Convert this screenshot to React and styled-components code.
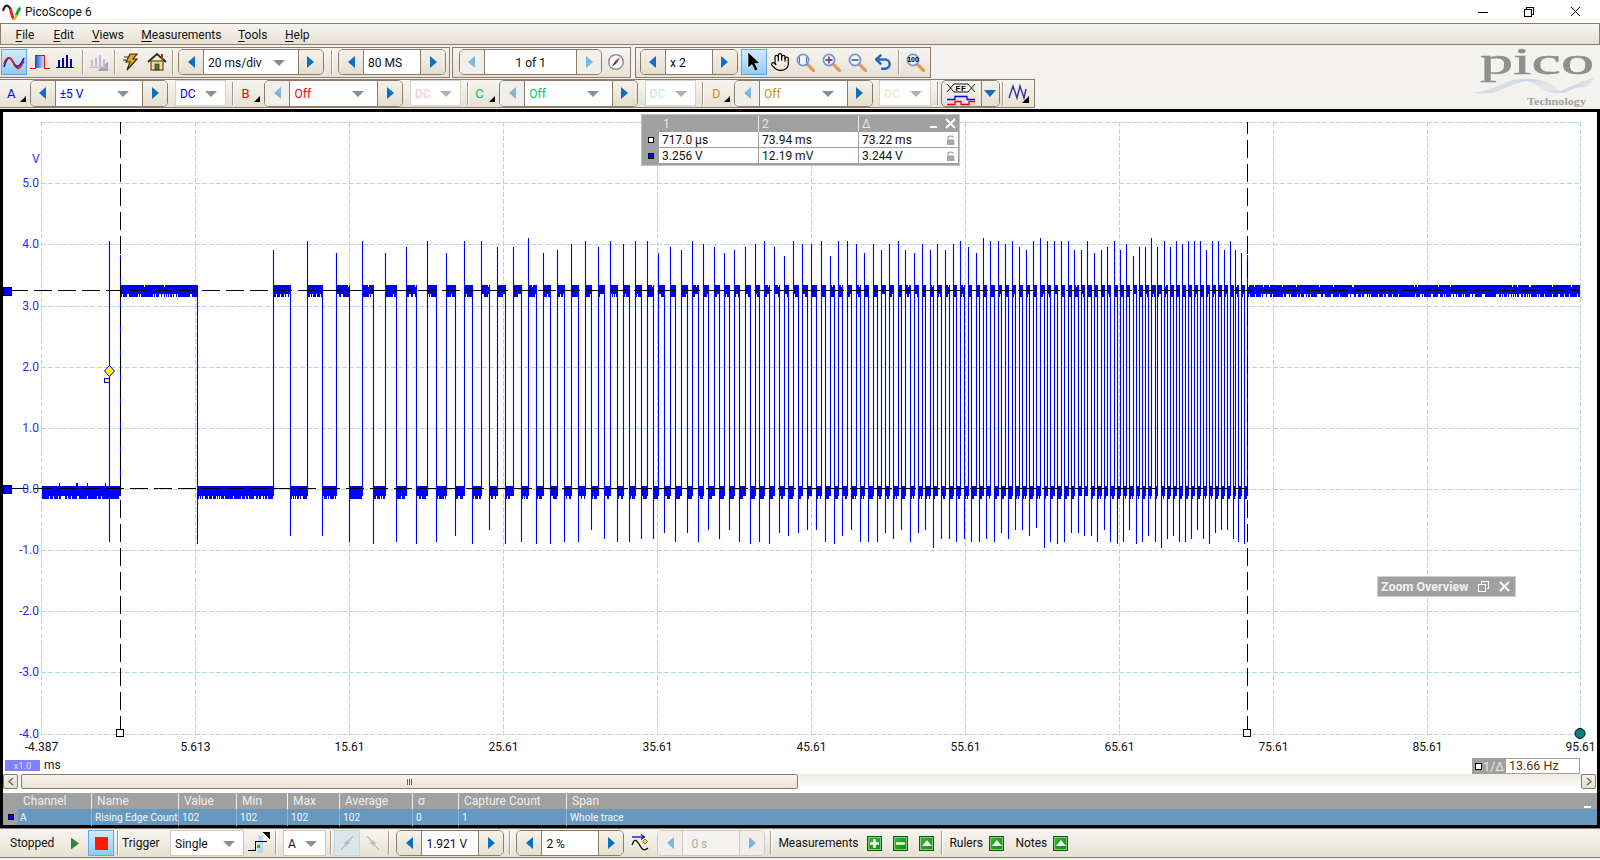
import React from 'react';
import styled, { createGlobalStyle } from 'styled-components';
import { Hand, Undo2 } from 'lucide-react';

const GlobalStyle = createGlobalStyle`
	html, body { margin: 0; padding: 0; background: #fff; }
	body { font-family: Roboto, "Liberation Sans", sans-serif; font-size: 12px; color: #111; }
`;

const BROWN = '#8b7c6e';
const BAR_BG = 'linear-gradient(#f5f3ee, #f3f0e9 30%, #e7e1d2)';

/* ---------- layout ---------- */
const Page = styled.div`
	width: 1600px;
	height: 860px;
	display: flex;
	flex-direction: column;
	overflow: hidden;
`;

const TitleBar = styled.div`
	height: 23px;
	display: flex;
	align-items: center;
	padding-left: 2px;
	background: #fff;
	flex: none;
`;

const TitleText = styled.span`
	margin-left: 3px;
`;

const WinButtons = styled.div`
	margin-left: auto;
	display: flex;
	margin-right: 2px;
`;

const WinButton = styled.div`
	width: 46px;
	height: 21px;
	display: flex;
	align-items: center;
	justify-content: center;
`;

const MenuBar = styled.div`
	height: 22px;
	box-sizing: border-box;
	flex: none;
	display: flex;
	align-items: center;
	padding-top: 2px;
	border: 1px solid ${BROWN};
	background: ${BAR_BG};
`;

const MenuSlot = styled.span`
	width: ${(p) => p.$w}px;
	flex: none;
	&:first-child { margin-left: 14.5px; }
	u { text-underline-offset: 2px; }
`;

const TopArea = styled.div`
	height: 64px;
	flex: none;
	display: flex;
	background: #f4f2ee;
`;

const Rows = styled.div`
	display: flex;
	flex-direction: column;
	padding-top: 2px;
`;

const Row = styled.div`
	display: flex;
	height: ${(p) => p.$h}px;
	margin-bottom: 1px;
`;

const Group = styled.div`
	width: ${(p) => p.$w}px;
	margin-right: ${(p) => p.$mr || 0}px;
	box-sizing: border-box;
	display: flex;
	align-items: center;
	padding-left: 1px;
	border: 1px solid ${BROWN};
	border-left-width: ${(p) => (p.$flush ? 0 : 1)}px;
	background: ${BAR_BG};
`;

const Sep = styled.div`
	width: 1px;
	align-self: stretch;
	margin: 2px ${(p) => p.$r ?? 3}px 2px ${(p) => p.$l ?? 3}px;
	background: #a79a8c;
	box-shadow: 1px 0 0 #fff;
	flex: none;
`;

const IconBtn = styled.div`
	width: ${(p) => p.$w || 26}px;
	height: 26px;
	box-sizing: border-box;
	flex: none;
	display: flex;
	align-items: center;
	justify-content: center;
	margin-left: ${(p) => p.$ml || 0}px;
	${(p) => p.$active && 'background: linear-gradient(#d5ebfd, #8fcbfb); border: 1px solid #62a8e4;'}
	${(p) => p.$dimmed && 'background: #dbe6ea; border: 1px solid #c6d6dc;'}
`;

/* ---------- spinner ---------- */
const SpinnerBox = styled.div`
	width: ${(p) => p.$w}px;
	height: ${(p) => p.$h || 26}px;
	margin-left: ${(p) => p.$ml || 0}px;
	box-sizing: border-box;
	flex: none;
	display: flex;
	border: 1px solid ${(p) => (p.$off ? '#cfc9c0' : BROWN)};
	border-radius: 5px;
	overflow: hidden;
`;

const ArrowBtn = styled.div`
	width: ${(p) => p.$w || 24}px;
	flex: none;
	display: flex;
	align-items: center;
	justify-content: center;
	background: ${(p) => (p.$off ? '#f1efea' : 'linear-gradient(#f5f2ea, #e6dfcf)')};
	&::after {
		content: '';
		border-style: solid;
		border-width: 6px 0 6px 7px;
		border-color: transparent transparent transparent ${(p) => (p.$off ? '#7db6df' : '#0b6fc2')};
		transform: ${(p) => (p.$left ? 'scaleX(-1)' : 'none')};
	}
`;

const SpinValue = styled.div`
	flex: 1;
	min-width: 0;
	display: flex;
	align-items: center;
	justify-content: ${(p) => (p.$center ? 'center' : 'space-between')};
	padding: 1px ${(p) => (p.$combo ? 13 : 4)}px 0 ${(p) => p.$pad || 4}px;
	background: ${(p) => (p.$off ? '#f4f2ee' : '#fff')};
	border-left: 1px solid ${(p) => (p.$off ? '#cfc9c0' : BROWN)};
	border-right: 1px solid ${(p) => (p.$off ? '#cfc9c0' : BROWN)};
	color: ${(p) => p.$color || '#111'};
`;

const DownTri = styled.span`
	width: 0;
	height: 0;
	flex: none;
	border-style: solid;
	border-width: 6px 6px 0;
	border-color: ${(p) => p.$color || '#8e8e8e'} transparent transparent;
`;

const Spinner = ({ w, h, ml, value, color, combo, center, leftOff, rightOff, off, pad }) => (
	<SpinnerBox $w={w} $h={h} $ml={ml} $off={off}>
		<ArrowBtn $left $off={leftOff || off} />
		<SpinValue $combo={combo} $center={center} $color={color} $off={off} $pad={pad}>
			<span>{value}</span>
			{combo && <DownTri />}
		</SpinValue>
		<ArrowBtn $off={rightOff || off} />
	</SpinnerBox>
);

const ComboBox = styled.div`
	width: ${(p) => p.$w}px;
	height: ${(p) => p.$h || 25}px;
	margin-left: ${(p) => p.$ml || 0}px;
	box-sizing: border-box;
	flex: none;
	display: flex;
	align-items: center;
	justify-content: space-between;
	padding: 1px 8px 0 4px;
	background: #fff;
	border: 1px solid ${(p) => p.$border || '#d6d2ca'};
	color: ${(p) => p.$color || '#111'};
`;

const ChanBtn = styled.div`
	position: relative;
	width: ${(p) => p.$w}px;
	flex: none;
	text-align: left;
	padding-left: ${(p) => p.$pad}px;
	box-sizing: border-box;
	color: ${(p) => p.$color};
	font-size: 13px;
	&::after {
		content: '';
		position: absolute;
		right: ${(p) => p.$tri}px;
		bottom: -1px;
		border-style: solid;
		border-width: 0 0 6px 6px;
		border-color: transparent transparent #000;
	}
`;

/* ---------- scope ---------- */
const Scope = styled.div`
	flex: none;
	height: 719px;
	box-sizing: border-box;
	display: flex;
	flex-direction: column;
	background: #fff;
	border: 3px solid #000;
`;

const Chart = styled.div`
	position: relative;
	height: 662px;
	flex: none;
`;

const ChartSvg = styled.svg`
	display: block;
	width: 1594px;
	height: 662px;
	font-family: Roboto, "Liberation Sans", sans-serif;
	font-size: 12px;
`;

const CursorTable = styled.div`
	position: absolute;
	left: 638px;
	top: 2px;
	width: 319px;
	box-sizing: border-box;
	border: 1px solid #c4c4c4;
	padding: 1px;
	background: #a0a0a0;
	display: grid;
	grid-template-columns: 16px 99px 100px 1fr;
	grid-auto-rows: 16px;
`;

const CursorHead = styled.div`
	position: relative;
	padding-left: ${(p) => p.$pad || 3}px;
	color: #e6e6e6;
	line-height: 16px;
	border-left: ${(p) => (p.$first ? 'none' : '1px solid #eee')};
`;

const Marker = styled.div`
	display: flex;
	align-items: center;
	justify-content: center;
	&::after {
		content: '';
		width: 4px;
		height: 4px;
		border: 1px solid #000;
		background: ${(p) => p.$color};
	}
`;

const CursorCell = styled.div`
	background: #fff;
	display: flex;
	align-items: center;
	justify-content: space-between;
	padding: 0 3px;
	box-sizing: border-box;
	border-left: ${(p) => (p.$first ? 'none' : '1px solid #a0a0a0')};
	border-bottom: 1px solid #a0a0a0;
`;

const HeadTools = styled.div`
	position: absolute;
	right: 2px;
	top: 0;
	display: flex;
	align-items: center;
	gap: 8px;
	height: 15px;
`;

const ToolDash = styled.span`
	width: 7px;
	height: 2px;
	margin-top: 6px;
	background: #fff;
`;

const ZoomOverview = styled.div`
	position: absolute;
	left: 1374px;
	top: 464px;
	width: 139px;
	height: 21px;
	box-sizing: border-box;
	display: flex;
	align-items: center;
	padding: 0 3px;
	background: #a0a0a0;
	border: 1px solid #d0d0d0;
	color: #f0f0f0;
	font-weight: 700;
	font-size: 12.5px;
	gap: 10px;
	white-space: nowrap;
`;

const ScaleBadge = styled.div`
	position: absolute;
	left: 2px;
	top: 646px;
	display: flex;
	align-items: center;
	gap: 4px;
`;

const BadgeBox = styled.div`
	width: 35px;
	height: 11px;
	background: #8080ff;
	color: #e0e0ff;
	font-size: 9.5px;
	line-height: 11px;
	text-align: center;
`;

const FreqBox = styled.div`
	position: absolute;
	left: 1469px;
	top: 646px;
	width: 108px;
	height: 16px;
	box-sizing: border-box;
	display: flex;
	border: 1px solid #a0a0a0;
	background: #fff;
`;

const FreqLabel = styled.div`
	width: 33px;
	background: #a0a0a0;
	color: #e6e6e6;
	display: flex;
	align-items: center;
	gap: 1px;
	padding-left: 2px;
	box-sizing: border-box;
	font-size: 12.5px;
	&::before {
		content: '';
		width: 5px;
		height: 5px;
		border: 1px solid #000;
		background: #fff;
	}
`;

const FreqValue = styled.div`
	padding-left: 3px;
	color: #5a3000;
	font-size: 12.5px;
	line-height: 14px;
`;

/* ---------- scrollbar ---------- */
const ScrollBar = styled.div`
	height: 15px;
	flex: none;
	display: flex;
	background: linear-gradient(#f0ece2, #f8f6f0 60%, #fff);
`;

const ScrollBtn = styled.div`
	width: 15px;
	box-sizing: border-box;
	border: 1px solid ${BROWN};
	border-radius: 2px;
	background: linear-gradient(#f5f2ea, #e6dfcf);
	display: flex;
	align-items: center;
	justify-content: center;
	margin-left: ${(p) => p.$ml || 0}px;
	color: #6e6255;
`;

const ScrollThumb = styled.div`
	width: 777px;
	margin-left: 3px;
	box-sizing: border-box;
	border: 1px solid ${BROWN};
	border-radius: 2px;
	background: linear-gradient(#f7f4ec, #e9e3d5);
	display: flex;
	align-items: center;
	justify-content: center;
	gap: 1px;
`;

const Grip = styled.i`
	width: 1px;
	height: 6px;
	background: #6e6255;
`;

/* ---------- measurement table ---------- */
const MeasureTable = styled.div`
	margin-top: 4px;
	height: 32px;
	flex: none;
	background: #a0a0a0;
`;

const TABLE_COLS = '88px 87px 58px 51px 52px 73px 46px 108px 1fr';

const TableHead = styled.div`
	height: 16px;
	display: grid;
	grid-template-columns: ${TABLE_COLS};
	color: #eee;
	line-height: 17px;
`;

const HeadCell = styled.div`
	position: relative;
	padding-left: ${(p) => p.$pad || 5}px;
	border-left: ${(p) => (p.$first ? 'none' : '1px solid #eee')};
`;

const MinDash = styled.span`
	position: absolute;
	right: 6px;
	bottom: 2px;
	width: 7px;
	height: 2px;
	background: #fff;
`;

const TableRow = styled.div`
	height: 16px;
	display: grid;
	grid-template-columns: ${TABLE_COLS};
	background: linear-gradient(90deg, #a0a0a0 15px, #6698c0 15px);
	color: #f4f8fc;
	font-size: 10.2px;
	line-height: 17px;
`;

const RowCell = styled.div`
	position: relative;
	padding-left: ${(p) => p.$pad || 3}px;
	border-left: ${(p) => (p.$first ? 'none' : '1px solid #8fb4d2')};
	white-space: nowrap;
	&::before {
		content: ${(p) => (p.$swatch ? "''" : 'none')};
		position: absolute;
		left: 5px;
		top: 5px;
		width: 4px;
		height: 4px;
		border: 1px solid #000;
		background: #00f;
	}
`;

/* ---------- status bar ---------- */
const StatusBar = styled.div`
	height: 30px;
	flex: none;
	box-sizing: border-box;
	display: flex;
	align-items: center;
	border-top: 1px solid ${BROWN};
	border-bottom: 1px solid ${BROWN};
	background: ${BAR_BG};
`;

const StatusText = styled.span`
	margin-left: ${(p) => p.$ml || 0}px;
	width: ${(p) => (p.$w ? `${p.$w}px` : 'auto')};
	flex: none;
`;

const BottomEdge = styled.div`
	height: 2px;
	background: #f4f2ee;
	flex: none;
`;

const GreenBtn = styled.div`
	width: 15px;
	height: 15px;
	margin-left: ${(p) => p.$ml || 0}px;
	box-sizing: border-box;
	flex: none;
	border: 1px solid #0a5a0a;
	box-shadow: inset 0 0 0 1px #7fd07f;
	background: linear-gradient(135deg, #3fb53f, #0a8a0a);
	display: flex;
	align-items: center;
	justify-content: center;
`;

const ArrowDown = styled.div`
	flex: 1;
	display: flex;
	align-items: center;
	justify-content: center;
	border-left: 1px solid ${BROWN};
	background: linear-gradient(#f5f2ea, #e6dfcf);
	&::after {
		content: '';
		border-style: solid;
		border-width: 7px 6px 0;
		border-color: #0b6fc2 transparent transparent;
	}
`;

const StopSquare = styled.span`
	width: 13px;
	height: 13px;
	background: #ff1a00;
`;

const UpTri = styled.span`
	width: 0;
	height: 0;
	border-style: solid;
	border-width: 0 5px 6px;
	border-color: transparent transparent #fff;
`;

const LogoSvg = styled.svg`
	margin-left: auto;
	flex: none;
	overflow: visible;
`;

/* ---------- icons ---------- */
const AppIcon = () => (
	<svg width="20" height="18" viewBox="0 0 20 18" fill="none">
		<path d="M1 8 C3 1,6 1,9 7" stroke="#222" strokeWidth="2.2" />
		<path d="M8.5 6 C9.5 11,10.5 15,12 16" stroke="#e02818" strokeWidth="3" />
		<path d="M11.5 16 C13 16,14 14,14.7 11" stroke="#f0c020" strokeWidth="3" />
		<path d="M14.5 12 C15.5 9,16.5 6,18.5 5" stroke="#18a028" strokeWidth="3" />
	</svg>
);

const ScopeIcon = () => (
	<svg width="22" height="16" viewBox="0 0 22 16" fill="none" strokeWidth="1.7">
		<path d="M1 13 C4 2,7 2,10 8 S16 15,21 4" stroke="#1414d8" />
		<path d="M1 10 C4 1,8 3,11 10 S17 15,21 7" stroke="#e02020" />
	</svg>
);

const PersistIcon = () => (
	<svg width="20" height="18" viewBox="0 0 20 18" shapeRendering="crispEdges">
		<defs>
			<linearGradient id="pf" x1="0" x2="1">
				<stop offset="0" stopColor="#2a5cd8" />
				<stop offset="1" stopColor="#bfe4f8" />
			</linearGradient>
		</defs>
		<rect x="6" y="3" width="8" height="12" fill="url(#pf)" />
		<path d="M0 15.5H5.5V2.5H14.5V15.5H20" fill="none" stroke="#f00000" strokeWidth="1.4" />
	</svg>
);

const BarsIcon = ({ color, shade }) => (
	<svg width="20" height="20" viewBox="0 0 20 20" shapeRendering="crispEdges">
		{shade && <path d="M8 19 L19 19 L19 10 Z" fill="#a8a6a0" />}
		<path d="M2 8h2v7h-2zM6 6h2v9h-2zM10 3h2v12h-2zM14 7h2v8h-2zM0 15h18v1h-18z" fill={color} />
	</svg>
);

const BoltIcon = () => (
	<svg width="20" height="20" viewBox="0 0 20 20">
		<path d="M9 2 L16 2 L12 7 L16 7 L6 18 L9 10 L5 10 Z" fill="#e0a820" stroke="#3a2a10" strokeWidth="1.2" />
		<path d="M3 5h4M2 8h3" stroke="#3a2a10" strokeWidth="1" />
	</svg>
);

const HomeIcon = () => (
	<svg width="20" height="20" viewBox="0 0 20 20">
		<rect x="4" y="9" width="12" height="9" fill="#f6dc88" stroke="#3a2a10" />
		<rect x="8" y="12" width="4" height="6" fill="#4a7d38" stroke="#3a2a10" strokeWidth=".7" />
		<path d="M1 10 L10 2 L19 10" fill="none" stroke="#3a2a10" strokeWidth="2" />
		<rect x="14" y="2" width="2" height="5" fill="#b03020" />
	</svg>
);

const CompassIcon = () => (
	<svg width="18" height="18" viewBox="0 0 18 18">
		<circle cx="9" cy="9" r="7.3" fill="#fff" stroke="#8a8a96" strokeWidth="1.4" />
		<path d="M13 4 L10.2 9.8 L8 8 Z" fill="#e02828" />
		<path d="M5 14 L8 8 L10.2 9.8 Z" fill="#2438c8" />
	</svg>
);

const PointerIcon = () => (
	<svg width="16" height="22" viewBox="0 0 16 22">
		<path d="M2 1 L2 17 L6 13.5 L9 20 L12 18.5 L9 12.5 L14 12.5 Z" fill="#000" stroke="#fff" strokeWidth=".6" />
	</svg>
);

const GlassIcon = ({ children }) => (
	<svg width="20" height="20" viewBox="0 0 20 20">
		<path d="M12.5 12.5 L18.5 18.5" stroke="#e49a58" strokeWidth="3.2" strokeLinecap="round" />
		<circle cx="8" cy="8" r="5.6" fill="#eef3fc" stroke="#7a96c8" strokeWidth="1.8" />
		{children}
	</svg>
);

const SerialIcon = () => (
	<svg width="30" height="24" viewBox="0 0 30 24">
		<path d="M1 2 L8 10 M1 10 L8 2 H22 L29 10 M8 10 H22 L29 2" fill="none" stroke="#000" strokeWidth=".9" />
		<text x="15" y="9.3" textAnchor="middle" fontSize="8" fontWeight="700" fontFamily="Liberation Sans" letterSpacing=".5">FF</text>
		<path d="M1 17.5H9V14.5H21V17.5H29" fill="none" stroke="#0000f0" strokeWidth="1.3" />
		<path d="M1 22.5H9V19.5H15V22.5H23V19.5H29" fill="none" stroke="#f00000" strokeWidth="1.3" />
	</svg>
);

const MathIcon = () => (
	<svg width="22" height="22" viewBox="0 0 22 22">
		<path d="M1 16 L5 4 L9 16 L12 4 L16 16 L18 7" fill="none" stroke="#34349c" strokeWidth="1.4" />
		<path d="M21 14 V21 H14 Z" fill="#000" />
	</svg>
);

const TriggerIcon = () => (
	<svg width="24" height="24" viewBox="0 0 24 24" shapeRendering="crispEdges">
		<rect x="11" y="4" width="5" height="18" fill="#bcd8f4" />
		<path d="M1 19.5H8.5V10.5H20" fill="none" stroke="#000" strokeWidth="1.4" />
		<rect x="10" y="14" width="3" height="3" fill="#20c020" />
		<path d="M23 1 V9 L15 1 Z" fill="#000" />
	</svg>
);

const EdgeIcon = ({ flip }) => (
	<svg width="18" height="18" viewBox="0 0 18 18" fill="none" stroke="#a8b0b0" strokeWidth="1.1">
		<path d={flip ? 'M3 2 L15 16' : 'M3 16 L15 2'} />
		<path d="M6 9h6M9 6v6" strokeWidth=".9" />
	</svg>
);

const PreTriggerIcon = () => (
	<svg width="20" height="20" viewBox="0 0 20 20" fill="none">
		<path d="M1 4H13" stroke="#0000e0" strokeWidth="1.3" />
		<path d="M10 1.5 L13.5 4 L10 6.5" stroke="#0000e0" strokeWidth="1.1" />
		<path d="M1 12 C3 6,5 6,8 11 S12 19,17 15" stroke="#000" strokeWidth="1.2" />
		<path d="M14 6 L16.5 8.5 L14 11 L11.5 8.5 Z" fill="#f0e020" stroke="#404000" strokeWidth=".7" />
	</svg>
);

const PlayIcon = () => (
	<svg width="10" height="13" viewBox="0 0 10 13">
		<path d="M1 0.5 L9 6.5 L1 12.5 Z" fill="#2f8a2f" />
	</svg>
);

const Lock = () => (
	<svg width="8" height="10" viewBox="0 0 8 10">
		<path d="M1 4.5 V2.6 C1 .6 6 .6 6.4 2.6" fill="none" stroke="#a8a8a8" strokeWidth="1.3" />
		<rect x="0" y="4.5" width="7.4" height="5.5" fill="#a8a8a8" />
	</svg>
);

const SmallX = ({ size = 11, color = '#fff', width = 2 }) => (
	<svg width={size} height={size} viewBox="0 0 11 11">
		<path d="M1 1 L10 10 M10 1 L1 10" stroke={color} strokeWidth={width} />
	</svg>
);

const Logo = () => (
	<LogoSvg width="125" height="64" viewBox="0 0 125 64">
		<text x="5" y="29" fontFamily="Liberation Serif" fontSize="38" fill="#8f8f8f" stroke="#8f8f8f" strokeWidth=".5" textLength="114" lengthAdjust="spacingAndGlyphs">pico</text>
		<g fill="none" stroke="#c4d2e2" strokeWidth=".5">
			{[0, 1, 2, 3, 4, 5, 6, 7].map((i) => (
				<path key={i} d={`M${i * 2} 48 C${22 + i} 46,${30 + i * 2} 33,${48 + i * 2} 35 S${70 + i * 2} 52,${86 + i} 46 S${108 + i} ${35 + i},${119 - i} ${34 + i}`} />
			))}
		</g>
		<text x="52" y="60" fontFamily="Liberation Serif" fontWeight="700" fontSize="11" fill="#a2a2a2" textLength="59" lengthAdjust="spacingAndGlyphs">Technology</text>
	</LogoSvg>
);

/* ---------- waveform, traced from the capture at 3x ---------- */
const TRACED = [
	[0, [[361, 75], [592, 943]]],
	[260, [[40, 60], [91, 917], [142, 33], [187, 917], [229, 69], [268, 935], [307, 33], [340, 943], [376, 69], [409, 935], [439, 51], [469, 943], [502, 33], [529, 935], [559, 69], [586, 917], [613, 33], [637, 943], [664, 33], [688, 899], [712, 51], [736, 943], [760, 51], [784, 935], [805, 24], [829, 943], [850, 69], [871, 943], [892, 60], [913, 935], [934, 42], [955, 935], [976, 33], [994, 899]]],
	[590, [[25, 51], [43, 926], [61, 33], [82, 935], [100, 42], [118, 935], [136, 33], [154, 926], [172, 33], [190, 926], [205, 69], [223, 908], [241, 51], [256, 935], [274, 60], [292, 908], [307, 33], [325, 935], [340, 42], [355, 899], [373, 51], [388, 926], [403, 69], [418, 899], [433, 60], [448, 935], [466, 51], [481, 943], [496, 42], [508, 935], [523, 33], [538, 943], [553, 51], [568, 908], [583, 78], [595, 917], [610, 33], [625, 908], [637, 42], [652, 899], [664, 42], [679, 899], [694, 33], [706, 935], [720, 78], [733, 943], [745, 33], [757, 917], [772, 33], [784, 899], [799, 42], [811, 935], [823, 69], [835, 935], [850, 42], [862, 935], [874, 60], [886, 908], [898, 42], [910, 926], [925, 33], [934, 899], [946, 60], [961, 935], [973, 69], [985, 908]]],
	[920, [[7, 42], [16, 899], [31, 60], [40, 953], [52, 42], [64, 926], [76, 60], [88, 926], [100, 42], [109, 935], [121, 33], [133, 926], [145, 51], [154, 935], [169, 69], [178, 935], [190, 24], [199, 926], [211, 33], [223, 935], [235, 33], [244, 908], [256, 42], [265, 926], [277, 33], [286, 899], [298, 51], [307, 899], [319, 60], [328, 917], [340, 33], [349, 893], [361, 24], [373, 953], [382, 33], [391, 935], [403, 33], [412, 943], [424, 33], [433, 935], [445, 33], [454, 908], [463, 60], [475, 908], [484, 60], [493, 917], [502, 33], [514, 917], [523, 69], [532, 935], [544, 60], [553, 899], [562, 51], [571, 935], [583, 33], [592, 943], [601, 60], [610, 935], [619, 42], [628, 899], [640, 78], [649, 943], [658, 51], [667, 935], [676, 51], [685, 917], [694, 24], [706, 935], [712, 51], [724, 953], [733, 33], [742, 926], [751, 51], [760, 917], [769, 33], [778, 935], [787, 42], [796, 935], [805, 33], [814, 926], [823, 33], [832, 899], [841, 33], [850, 926], [859, 60], [868, 943], [877, 33], [886, 908], [895, 33], [904, 899], [913, 60], [922, 899], [931, 33], [940, 926], [946, 60], [955, 935], [964, 69], [973, 943], [982, 75]]],
];

const EDGES = TRACED.flatMap(([x0, list]) => list.map(([x, tip]) => ({ x: Math.round(x0 + x / 3), tip: Math.round(230 + tip / 3) })));

const makeRand = (seed) => {
	let s = seed;
	return () => {
		s = (s * 16807) % 2147483647;
		return s / 2147483647;
	};
};

const bandPath = (x0, x1, high, rand) => {
	const top = high ? 285 : 486;
	const body = high ? 294 : 496;
	const tick = high ? 297 : 499;
	let d = '';
	for (let x = x0; x < x1; x += 1) {
		const bottom = rand() < 0.72 ? tick : body;
		const r = rand();
		let t = top;
		if (high && r < 0.06) t = top + 2;
		if (!high && x < 120 && r < 0.05) t = top - 3;
		d += `M${x} ${t}h1V${bottom}h-1z`;
	}
	return d;
};

const buildWave = () => {
	const rand = makeRand(1234);
	let bands = bandPath(42, EDGES[0].x, false, rand);
	let lines = 'M109.5 241V542';
	EDGES.forEach((e, i) => {
		const high = i % 2 === 0;
		const next = i + 1 < EDGES.length ? EDGES[i + 1].x : 1580;
		bands += bandPath(e.x, next, high, rand);
		lines += high ? `M${e.x + 0.5} ${e.tip}V496` : `M${e.x + 0.5} 285V${e.tip}`;
	});
	return { bands, lines };
};

const WAVE = buildWave();
const GRID_X = Array.from({ length: 11 }, (_, i) => Math.round(41.4 + 153.9 * i) + 0.5);
const GRID_Y = Array.from({ length: 11 }, (_, i) => Math.round(122.1 + 61.15 * i) + 0.5);
const Y_LABELS = ['5.0', '4.0', '3.0', '2.0', '1.0', '0.0', '-1.0', '-2.0', '-3.0', '-4.0'];
const X_LABELS = ['-4.387', '5.613', '15.61', '25.61', '35.61', '45.61', '55.61', '65.61', '75.61', '85.61', '95.61'];

const ScopeChart = () => (
	<ChartSvg viewBox="3 112 1594 662">
		<g stroke="#add8e6" strokeDasharray="5 2" shapeRendering="crispEdges">
			{GRID_X.map((x) => <line key={x} x1={x} x2={x} y1="122" y2="734" />)}
			{GRID_Y.map((y) => <line key={y} x1="41" x2="1581" y1={y} y2={y} />)}
		</g>
		<path d={WAVE.bands} fill="#0000ff" shapeRendering="crispEdges" />
		<path d={WAVE.lines} stroke="#0000ff" strokeWidth="1.1" fill="none" />
		<g stroke="#000" shapeRendering="crispEdges">
			<line x1="3" x2="1580" y1="290.5" y2="290.5" strokeDasharray="18 6" strokeDashoffset="17" />
			<line x1="3" x2="1248" y1="488.5" y2="488.5" strokeDasharray="18 6" strokeDashoffset="17" />
			<line x1="120.5" x2="120.5" y1="122" y2="733" strokeDasharray="18 6" strokeDashoffset="6" />
			<line x1="1247.5" x2="1247.5" y1="122" y2="733" strokeDasharray="18 6" strokeDashoffset="6" />
		</g>
		<g fill="#0000ff" stroke="#000" shapeRendering="crispEdges">
			<rect x="3.5" y="287.5" width="8" height="8" />
			<rect x="3.5" y="485.5" width="8" height="8" />
		</g>
		<g fill="#fff" stroke="#000" shapeRendering="crispEdges">
			<rect x="116.5" y="729.5" width="7" height="7" />
			<rect x="1243.5" y="729.5" width="7" height="7" />
		</g>
		<path d="M109.5 365.5 L114.5 371 L109.5 376.5 L104.5 371 Z" fill="#ffff00" stroke="#0000c0" />
		<rect x="104.5" y="378.5" width="5" height="3.5" fill="#ffff00" stroke="#0000c0" shapeRendering="crispEdges" />
		<circle cx="1580" cy="733.5" r="5" fill="#008080" stroke="#000" />
		<text x="32" y="163" fill="#2a2aff">V</text>
		{Y_LABELS.map((t, i) => (
			<text key={t} x="39" y={GRID_Y[i + 1] + 3} textAnchor="end" fill="#2a2aff">{t}</text>
		))}
		{X_LABELS.map((t, i) => (
			<text key={t} x={GRID_X[i]} y="751" textAnchor="middle" fill="#111">{t}</text>
		))}
	</ChartSvg>
);

const Channel = ({ name, color, soft, labelW, pad, value }) => (
	<>
		<ChanBtn $w={labelW} $pad={pad} $color={color} $tri={4}>{name}</ChanBtn>
		<Spinner w={138.7} h={27} value={value} color={color} combo leftOff={name !== 'A'} />
		<ComboBox $w={51.5} $h={26} $ml={6.6} $color={soft || color}>
			DC<DownTri $color={soft ? '#b4b0a8' : '#8e8e8e'} />
		</ComboBox>
	</>
);

const MENU = [['F', 'ile', 38], ['E', 'dit', 38.4], ['V', 'iews', 49.4], ['M', 'easurements', 96.7], ['T', 'ools', 47], ['H', 'elp', 40]];

const App = () => (
	<Page>
		<GlobalStyle />
		<TitleBar>
			<AppIcon />
			<TitleText>PicoScope 6</TitleText>
			<WinButtons>
				<WinButton>
					<svg width="10" height="10" viewBox="0 0 10 10"><path d="M0 5.5H10" stroke="#000" /></svg>
				</WinButton>
				<WinButton>
					<svg width="10" height="10" viewBox="0 0 10 10" fill="none" stroke="#000" shapeRendering="crispEdges">
						<path d="M2.5 2.5V.5H9.5V7.5H7.5" />
						<rect x=".5" y="2.5" width="7" height="7" />
					</svg>
				</WinButton>
				<WinButton>
					<SmallX color="#000" width={1} />
				</WinButton>
			</WinButtons>
		</TitleBar>

		<MenuBar>
			{MENU.map(([k, rest, w]) => (
				<MenuSlot key={k} $w={w}><u>{k}</u>{rest}</MenuSlot>
			))}
		</MenuBar>

		<TopArea>
			<Rows>
				<Row $h={31}>
					<Group $w={449.6} $mr={2.7} $flush>
						<IconBtn $active><ScopeIcon /></IconBtn>
						<IconBtn><PersistIcon /></IconBtn>
						<IconBtn><BarsIcon color="#0000a8" /></IconBtn>
						<Sep />
						<IconBtn><BarsIcon color="#c4bcdc" shade /></IconBtn>
						<Sep $l={2} />
						<IconBtn><BoltIcon /></IconBtn>
						<IconBtn><HomeIcon /></IconBtn>
						<Sep $l={2} $r={5} />
						<Spinner w={145.5} value="20 ms/div" combo />
						<Sep $l={7} $r={6.5} />
						<Spinner w={108.2} value="80 MS" />
					</Group>
					<Group $w={179.1} $mr={3.4}>
						<Spinner w={143.5} ml={4.7} value="1 of 1" center leftOff rightOff />
						<IconBtn $ml={1}><CompassIcon /></IconBtn>
					</Group>
					<Group $w={295.8}>
						<Spinner w={98} ml={3.2} value="x 2" />
						<IconBtn $ml={2.7} $active><PointerIcon /></IconBtn>
						<IconBtn><Hand size={20} color="#000" strokeWidth={1.4} /></IconBtn>
						<IconBtn $w={25.5}>
							<GlassIcon><path d="M5 5.5H4.5V10.5H5M11 5.5H11.5V10.5H11" stroke="#5068a8" fill="none" /></GlassIcon>
						</IconBtn>
						<IconBtn>
							<GlassIcon><path d="M4.5 8H11.5M8 4.5V11.5" stroke="#8040a0" strokeWidth="1.8" /></GlassIcon>
						</IconBtn>
						<IconBtn>
							<GlassIcon><path d="M4.5 8H11.5" stroke="#5068a8" strokeWidth="1.8" /></GlassIcon>
						</IconBtn>
						<IconBtn><Undo2 size={20} color="#2468c8" strokeWidth={3} /></IconBtn>
						<Sep $l={2} $r={3} />
						<IconBtn>
							<GlassIcon>
								<text x="8" y="10.4" textAnchor="middle" fontSize="7" fontWeight="700" fontFamily="Liberation Sans">100</text>
							</GlassIcon>
						</IconBtn>
					</Group>
				</Row>
				<Row $h={29.5}>
					<Group $w={1035.4} $flush>
						<Channel name="A" color="#0000ff" labelW={28.7} pad={6} value="±5 V" />
						<Sep $l={6} />
						<Channel name="B" color="#ff0000" soft="#f6c6d0" labelW={28} pad={5} value="Off" />
						<Sep $l={6} />
						<Channel name="C" color="#00c468" soft="#bcead6" labelW={28} pad={4} value="Off" />
						<Sep $l={6} />
						<Channel name="D" color="#c8921a" soft="#efe2c2" labelW={28} pad={6} value="Off" />
						<Sep $l={6} />
						<SpinnerBox $w={59.2} $h={27} $ml={0}>
							<IconBtn $w={39}><SerialIcon /></IconBtn>
							<ArrowDown />
						</SpinnerBox>
						<Sep $l={2} $r={5} />
						<MathIcon />
					</Group>
				</Row>
			</Rows>
			<Logo />
		</TopArea>

		<Scope>
			<Chart>
				<ScopeChart />
				<CursorTable>
					<CursorHead $first />
					<CursorHead $first $pad={4}>1</CursorHead>
					<CursorHead>2</CursorHead>
					<CursorHead>
						Δ
						<HeadTools>
							<ToolDash />
							<SmallX />
						</HeadTools>
					</CursorHead>
					<Marker $color="#fff" />
					<CursorCell $first>717.0 µs</CursorCell>
					<CursorCell>73.94 ms</CursorCell>
					<CursorCell>73.22 ms<Lock /></CursorCell>
					<Marker $color="#0000ff" />
					<CursorCell $first>3.256 V</CursorCell>
					<CursorCell>12.19 mV</CursorCell>
					<CursorCell>3.244 V<Lock /></CursorCell>
				</CursorTable>
				<ZoomOverview>
					Zoom Overview
					<svg width="11" height="11" viewBox="0 0 11 11" fill="none" stroke="#fff" shapeRendering="crispEdges">
						<path d="M3.5 2.5V.5H10.5V7.5H8.5" />
						<rect x=".5" y="3.5" width="7" height="7" />
					</svg>
					<SmallX />
				</ZoomOverview>
				<ScaleBadge>
					<BadgeBox>x1.0</BadgeBox>
					<span>ms</span>
				</ScaleBadge>
				<FreqBox>
					<FreqLabel>1/Δ</FreqLabel>
					<FreqValue>13.66 Hz</FreqValue>
				</FreqBox>
			</Chart>
			<ScrollBar>
				<ScrollBtn>
					<svg width="6" height="9" viewBox="0 0 6 9"><path d="M5 1 L1 4.5 L5 8" fill="none" stroke="currentColor" strokeWidth="1.3" /></svg>
				</ScrollBtn>
				<ScrollThumb><Grip /><Grip /><Grip /></ScrollThumb>
				<ScrollBtn $ml={783}>
					<svg width="6" height="9" viewBox="0 0 6 9"><path d="M1 1 L5 4.5 L1 8" fill="none" stroke="currentColor" strokeWidth="1.3" /></svg>
				</ScrollBtn>
			</ScrollBar>
			<MeasureTable>
				<TableHead>
					<HeadCell $first $pad={20}>Channel</HeadCell>
					<HeadCell>Name</HeadCell>
					<HeadCell>Value</HeadCell>
					<HeadCell>Min</HeadCell>
					<HeadCell>Max</HeadCell>
					<HeadCell>Average</HeadCell>
					<HeadCell>σ</HeadCell>
					<HeadCell>Capture Count</HeadCell>
					<HeadCell>Span<MinDash /></HeadCell>
				</TableHead>
				<TableRow>
					<RowCell $first $swatch $pad={17}>A</RowCell>
					<RowCell>Rising Edge Count</RowCell>
					<RowCell>102</RowCell>
					<RowCell>102</RowCell>
					<RowCell>102</RowCell>
					<RowCell>102</RowCell>
					<RowCell>0</RowCell>
					<RowCell>1</RowCell>
					<RowCell>Whole trace</RowCell>
				</TableRow>
			</MeasureTable>
		</Scope>

		<StatusBar>
			<StatusText $ml={10} $w={60}>Stopped</StatusText>
			<PlayIcon />
			<IconBtn $ml={8} $active>
				<StopSquare />
			</IconBtn>
			<Sep $l={3} $r={4} />
			<StatusText $w={48}>Trigger</StatusText>
			<ComboBox $w={74} $h={26} $border="#cfc9c0">Single<DownTri /></ComboBox>
			<IconBtn $ml={2}><TriggerIcon /></IconBtn>
			<Sep $l={3} $r={7} />
			<ComboBox $w={43.4} $h={26} $border="#cfc9c0">A<DownTri /></ComboBox>
			<Sep $l={4} $r={3} />
			<IconBtn $dimmed $w={26}><EdgeIcon /></IconBtn>
			<IconBtn $w={26}><EdgeIcon flip /></IconBtn>
			<Sep $l={2} $r={7} />
			<Spinner w={108} value="1.921 V" />
			<Sep $l={5} $r={6} />
			<Spinner w={108} value="2 %" />
			<IconBtn $ml={4}><PreTriggerIcon /></IconBtn>
			<Spinner w={108} ml={3} value="0 s" color="#b0aca4" off pad={8} />
			<Sep $l={5} $r={7} />
			<StatusText $w={89}>Measurements</StatusText>
			<GreenBtn><svg width="9" height="9" viewBox="0 0 9 9"><path d="M4.5 0V9M0 4.5H9" stroke="#fff" strokeWidth="2.4" /></svg></GreenBtn>
			<GreenBtn $ml={11}><svg width="9" height="9" viewBox="0 0 9 9"><path d="M0 4.5H9" stroke="#fff" strokeWidth="2.4" /></svg></GreenBtn>
			<GreenBtn $ml={11}><UpTri /></GreenBtn>
			<Sep $l={7} $r={7} />
			<StatusText $w={40}>Rulers</StatusText>
			<GreenBtn><UpTri /></GreenBtn>
			<StatusText $ml={11} $w={38}>Notes</StatusText>
			<GreenBtn><UpTri /></GreenBtn>
		</StatusBar>
		<BottomEdge />
	</Page>
);

export default App;
